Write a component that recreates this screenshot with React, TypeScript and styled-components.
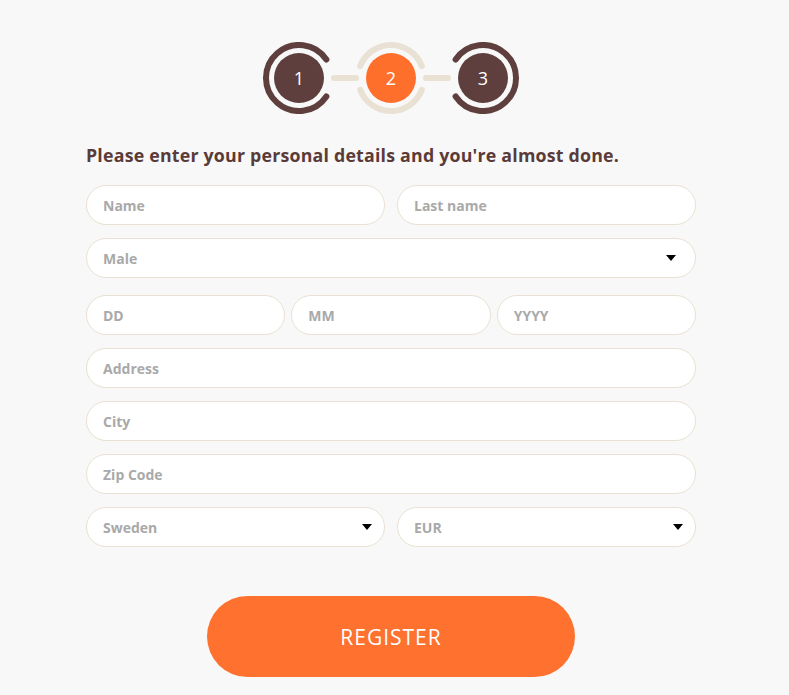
import React from 'react';
import styled, { createGlobalStyle } from 'styled-components';

const GlobalStyle = createGlobalStyle`
    html, body {
        margin: 0;
        padding: 0;
        background-color: #f8f8f8;
    }
    * {
        box-sizing: border-box;
    }
`;

const PageContainer = styled.div`
    display: flex;
    flex-direction: column;
    align-items: center;
    width: 789px;
    min-height: 695px;
    padding: 42px 93px 0 86px;
    background-color: #f8f8f8;
    font-family: "Open Sans", "Liberation Sans", sans-serif;
`;

const Stepper = styled.div`
    display: flex;
    align-items: center;
`;

const StepBox = styled.div`
    position: relative;
    width: 72px;
    height: 72px;
    flex: none;
    z-index: 1;
`;

const StepRing = styled.svg`
    position: absolute;
    inset: 0;
`;

const StepDisc = styled.div<{ $active?: boolean }>`
    position: absolute;
    top: 11px;
    left: 11px;
    width: 50px;
    height: 50px;
    border-radius: 50%;
    background-color: ${p => (p.$active ? '#ff6f2c' : '#5e3f3d')};
    color: #ffffff;
    display: flex;
    align-items: center;
    justify-content: center;
    font-size: 18px;
    line-height: 1;
`;

const Connector = styled.div`
    width: 28px;
    height: 6px;
    margin: 0 -4px;
    border-radius: 3px;
    background-color: #e9e1d3;
`;

const Heading = styled.h2`
    align-self: flex-start;
    margin: 29px 0 18px;
    font-size: 17.8px;
    line-height: 24px;
    font-weight: 700;
    letter-spacing: 0.2px;
    color: #5b3b38;
`;

const Form = styled.form`
    display: flex;
    flex-direction: column;
    width: 610px;
`;

const Row = styled.div<{ $cols: number; $gap: number; $mt?: number }>`
    display: grid;
    grid-template-columns: repeat(${p => p.$cols}, 1fr);
    gap: ${p => p.$gap}px;
    margin-top: ${p => p.$mt ?? 13}px;
    &:first-child {
        margin-top: 0;
    }
`;

const Field = styled.input`
    width: 100%;
    height: 40px;
    padding: 0 16px;
    border: 1px solid #e9e1d3;
    border-radius: 20px;
    background-color: #ffffff;
    font-family: "Open Sans", "Liberation Sans", sans-serif;
    font-size: 14px;
    font-weight: 700;
    color: #5b3b38;
    outline: none;
    &::placeholder {
        color: #a9a9a9;
    }
`;

const SelectWrap = styled.div`
    position: relative;
    width: 100%;
    height: 40px;
`;

const Select = styled.select`
    appearance: none;
    width: 100%;
    height: 40px;
    padding: 0 16px;
    border: 1px solid #e9e1d3;
    border-radius: 20px;
    background-color: #ffffff;
    font-family: "Open Sans", "Liberation Sans", sans-serif;
    font-size: 14px;
    font-weight: 700;
    color: #a9a9a9;
    outline: none;
`;

const Caret = styled.span<{ $right: number }>`
    position: absolute;
    right: ${p => p.$right}px;
    top: 17px;
    width: 0;
    height: 0;
    border-left: 5px solid transparent;
    border-right: 5px solid transparent;
    border-top: 6px solid #000000;
    pointer-events: none;
`;

const RegisterButton = styled.button`
    align-self: center;
    width: 368px;
    height: 81px;
    margin-top: 49px;
    border: none;
    border-radius: 41px;
    background-color: #ff712e;
    color: #ffffff;
    font-family: "Open Sans", "Liberation Sans", sans-serif;
    font-size: 21px;
    letter-spacing: 1px;
    cursor: pointer;
`;

type GapSide = 'left' | 'right' | 'both';

const R = 33;
const C = 36;

const pt = (deg: number) => {
    const a = (deg * Math.PI) / 180;
    return `${(C + R * Math.cos(a)).toFixed(2)} ${(C - R * Math.sin(a)).toFixed(2)}`;
};

const ringPaths = (side: GapSide, g: number): string[] => {
    if (side === 'right') return [`M ${pt(g)} A ${R} ${R} 0 1 0 ${pt(-g)}`];
    if (side === 'left') return [`M ${pt(180 - g)} A ${R} ${R} 0 1 1 ${pt(180 + g)}`];
    return [
        `M ${pt(g)} A ${R} ${R} 0 0 0 ${pt(180 - g)}`,
        `M ${pt(180 + g)} A ${R} ${R} 0 0 0 ${pt(360 - g)}`,
    ];
};

const Step: React.FC<{ n: number; side: GapSide; active?: boolean }> = ({ n, side, active }) => {
    const color = active ? '#e9e1d3' : '#5e3f3d';
    const g = active ? 21 : 34;
    return (
        <StepBox>
            <StepRing width="72" height="72" viewBox="0 0 72 72">
                {ringPaths(side, g).map((d, i) => (
                    <path key={i} d={d} fill="none" stroke={color} strokeWidth="6" strokeLinecap="round" />
                ))}
            </StepRing>
            <StepDisc $active={active}>{n}</StepDisc>
        </StepBox>
    );
};

const Dropdown: React.FC<{ value: string; caretRight?: number }> = ({ value, caretRight = 13 }) => (
    <SelectWrap>
        <Select defaultValue={value}>
            <option>{value}</option>
        </Select>
        <Caret $right={caretRight} />
    </SelectWrap>
);

const App: React.FC = () => {
    return (
        <PageContainer>
            <GlobalStyle />
            <Stepper>
                <Step n={1} side="right" />
                <Connector />
                <Step n={2} side="both" active />
                <Connector />
                <Step n={3} side="left" />
            </Stepper>
            <Heading>Please enter your personal details and you're almost done.</Heading>
            <Form onSubmit={e => e.preventDefault()}>
                <Row $cols={2} $gap={12}>
                    <Field placeholder="Name" />
                    <Field placeholder="Last name" />
                </Row>
                <Row $cols={1} $gap={0}>
                    <Dropdown value="Male" caretRight={20} />
                </Row>
                <Row $cols={3} $gap={6} $mt={17}>
                    <Field placeholder="DD" />
                    <Field placeholder="MM" />
                    <Field placeholder="YYYY" />
                </Row>
                <Row $cols={1} $gap={0}>
                    <Field placeholder="Address" />
                </Row>
                <Row $cols={1} $gap={0}>
                    <Field placeholder="City" />
                </Row>
                <Row $cols={1} $gap={0}>
                    <Field placeholder="Zip Code" />
                </Row>
                <Row $cols={2} $gap={12}>
                    <Dropdown value="Sweden" />
                    <Dropdown value="EUR" />
                </Row>
                <RegisterButton type="submit">REGISTER</RegisterButton>
            </Form>
        </PageContainer>
    );
};

export default App;
